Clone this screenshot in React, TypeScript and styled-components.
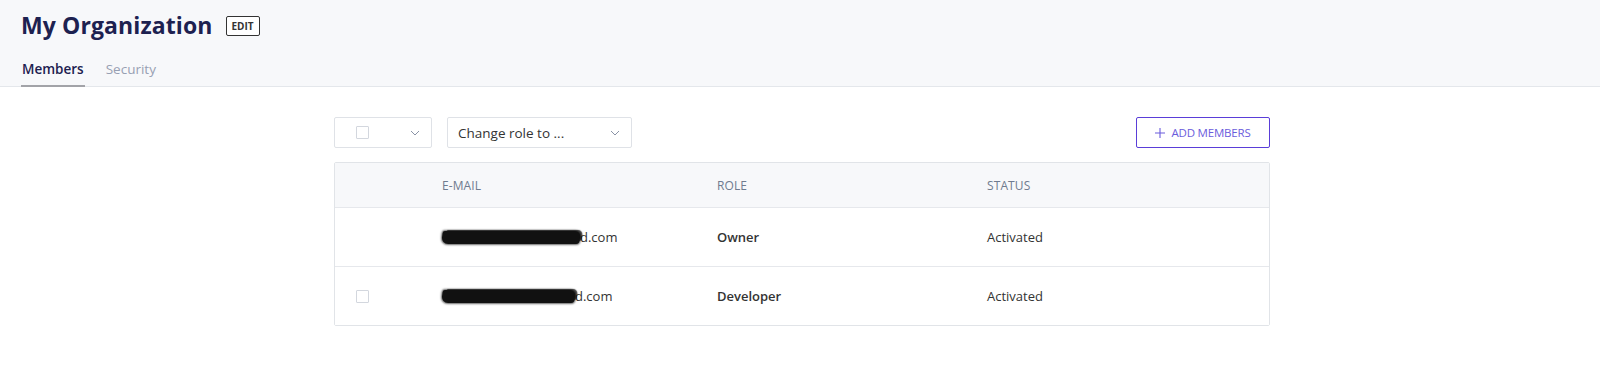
import styled, { createGlobalStyle } from 'styled-components';

interface IMember {
  id: number;
  domain: string;
  redactWidth: number;
  role: string;
  status: string;
  selectable: boolean;
}

const members: IMember[] = [
  { id: 1, domain: 'd.com', redactWidth: 138, role: 'Owner', status: 'Activated', selectable: false },
  { id: 2, domain: 'd.com', redactWidth: 133, role: 'Developer', status: 'Activated', selectable: true },
];

const GlobalStyle = createGlobalStyle`
  body {
    margin: 0;
    background: #fff;
    font-family: "Open Sans", "Noto Sans", sans-serif;
    color: #333;
  }
`;

const Header = styled.header`
  background: #f7f8fa;
  border-bottom: 1px solid #e4e7eb;
  padding: 0 21px;
`;

const TitleRow = styled.div`
  display: flex;
  align-items: center;
  gap: 13px;
  height: 50px;
`;

const Title = styled.h1`
  margin: 0;
  font-size: 23px;
  font-weight: 700;
  color: #1d2150;
  letter-spacing: 0.1px;
`;

const EditBadge = styled.button`
  font-family: inherit;
  font-size: 10px;
  font-weight: 700;
  color: #333;
  background: #fff;
  border: 1px solid #333;
  border-radius: 2px;
  padding: 0 5px;
  height: 20px;
  line-height: 18px;
  margin-top: 1px;
`;

const Tabs = styled.nav`
  display: flex;
  gap: 20px;
  margin-top: 8px;
`;

const Tab = styled.a<{ $active?: boolean }>`
  font-size: 13.5px;
  font-weight: ${({ $active }) => ($active ? 600 : 400)};
  color: ${({ $active }) => ($active ? '#1d2150' : '#97a0b3')};
  padding: 2px 1px 7px;
  margin-bottom: -1px;
  border-bottom: 2px solid ${({ $active }) => ($active ? '#a2a3a8' : 'transparent')};
  cursor: pointer;
`;

const Content = styled.main`
  width: 936px;
  margin: 30px auto 0;
  padding-left: 4px;
`;

const Toolbar = styled.div`
  display: flex;
  align-items: center;
  gap: 15px;
  height: 31px;
`;

const Select = styled.div<{ $width: number; $inset: number }>`
  box-sizing: border-box;
  width: ${({ $width }) => $width}px;
  height: 31px;
  display: flex;
  align-items: center;
  justify-content: space-between;
  padding: 0 11px 0 ${({ $inset }) => $inset}px;
  border: 1px solid #dfe2e7;
  border-radius: 2px;
  background: #fff;
  font-size: 13.5px;
  color: #333;
`;

const CheckBox = styled.span`
  box-sizing: border-box;
  width: 13px;
  height: 13px;
  border: 1px solid #d3d7de;
  border-radius: 1px;
  background: #fff;
  display: inline-block;
`;

const AddButton = styled.button`
  margin-left: auto;
  height: 31px;
  width: 134px;
  box-sizing: border-box;
  border: 1px solid #5a3ed8;
  border-radius: 2px;
  background: #fff;
  color: #6b5cdc;
  font-family: inherit;
  font-size: 11.5px;
  display: flex;
  align-items: center;
  justify-content: center;
  gap: 6px;
  letter-spacing: -0.2px;
`;

const Table = styled.div`
  margin-top: 14px;
  border: 1px solid #e1e4e8;
  border-radius: 2px;
`;

const Row = styled.div<{ $head?: boolean }>`
  display: grid;
  grid-template-columns: 107px 275px 270px 1fr;
  align-items: center;
  height: ${({ $head }) => ($head ? 44 : 58)}px;
  background: ${({ $head }) => ($head ? '#f7f8fa' : '#fff')};
  border-top: 1px solid #e6e8ec;

  &:first-child {
    border-top: none;
  }
`;

const HeadCell = styled.div`
  font-size: 12px;
  color: #6f7b8f;
  letter-spacing: 0.1px;
`;

const Cell = styled.div<{ $strong?: boolean }>`
  font-size: 13px;
  color: #333;
  font-weight: ${({ $strong }) => ($strong ? 600 : 400)};
  display: flex;
  align-items: center;
`;

const CheckCell = styled.div`
  padding-left: 21px;
  display: flex;
  align-items: center;
`;

const Redacted = styled.span<{ $width: number }>`
  display: inline-block;
  width: ${({ $width }) => $width}px;
  height: 13px;
  background: #111;
  border-radius: 2px 6px 3px 7px;
  transform: skewX(-8deg);
  box-shadow: 0 0 2px 1px rgba(0, 0, 0, 0.6), 3px -2px 1px -1px rgba(0, 0, 0, 0.7);
`;

function Chevron() {
  return (
    <svg width="10" height="6" viewBox="0 0 10 6">
      <path d="M1 1l4 4 4-4" fill="none" stroke="#8a93a6" strokeWidth="1" />
    </svg>
  );
}

function Plus() {
  return (
    <svg width="10" height="10" viewBox="0 0 10 10">
      <path d="M5 0v10M0 5h10" stroke="#6b5cdc" strokeWidth="1.1" />
    </svg>
  );
}

export default function App() {
  return (
    <>
      <GlobalStyle />
      <Header>
        <TitleRow>
          <Title>My Organization</Title>
          <EditBadge>EDIT</EditBadge>
        </TitleRow>
        <Tabs>
          <Tab $active>Members</Tab>
          <Tab>Security</Tab>
        </Tabs>
      </Header>
      <Content>
        <Toolbar>
          <Select $width={98} $inset={21}>
            <CheckBox />
            <Chevron />
          </Select>
          <Select $width={185} $inset={10}>
            <span>Change role to ...</span>
            <Chevron />
          </Select>
          <AddButton>
            <Plus />
            ADD MEMBERS
          </AddButton>
        </Toolbar>
        <Table>
          <Row $head>
            <div />
            <HeadCell>E-MAIL</HeadCell>
            <HeadCell>ROLE</HeadCell>
            <HeadCell>STATUS</HeadCell>
          </Row>
          {members.map((member) => (
            <Row key={member.id}>
              <CheckCell>{member.selectable && <CheckBox />}</CheckCell>
              <Cell>
                <Redacted $width={member.redactWidth} />
                {member.domain}
              </Cell>
              <Cell $strong>{member.role}</Cell>
              <Cell>{member.status}</Cell>
            </Row>
          ))}
        </Table>
      </Content>
    </>
  );
}
